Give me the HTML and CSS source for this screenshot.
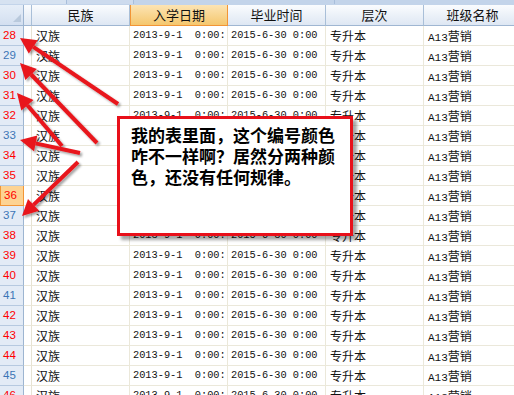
FILE: index.html
```
<!DOCTYPE html>
<html lang="zh-CN">
<head>
<meta charset="UTF-8">
<meta name="viewport" content="width=device-width, initial-scale=1.0">
<title>表格</title>
<link rel="stylesheet" href="styles.css">
</head>
<body>

<div class="topbar">
    <span class="tab1"></span>
    <span class="tab2"></span>
    <span class="tab3"></span>
</div>

<div class="sheet">
    <div class="row head">
        <div class="hd corner"><span class="tri"></span></div>
        <div class="hd"></div>
        <div class="hd">民族</div>
        <div class="hd sel">入学日期</div>
        <div class="hd">毕业时间</div>
        <div class="hd">层次</div>
        <div class="hd">班级名称</div>
    </div>
    <div id="rows"></div>
</div>

<div class="callout">我的表里面，这个编号颜色<br>咋不一样啊？居然分两种颜<br>色，还没有任何规律。</div>

<svg class="arrows" width="514" height="395" viewBox="0 0 514 395">
    <defs>
        <filter id="shadow" x="-20%" y="-20%" width="140%" height="140%">
            <feDropShadow dx="2" dy="2" stdDeviation="1.2" flood-color="#000" flood-opacity="0.35"/>
        </filter>
    </defs>
    <g filter="url(#shadow)" fill="#e8141b" stroke="#e8141b">
        <line x1="118" y1="104" x2="33.3" y2="46.9" stroke-width="4"/>
        <polygon points="20,38 37.7,40.3 28.8,53.6" stroke="none"/>
        <line x1="97" y1="143" x2="31.1" y2="74.5" stroke-width="4"/>
        <polygon points="20,63 36.9,69 25.3,80.1" stroke="none"/>
        <line x1="62" y1="146" x2="27.4" y2="105.2" stroke-width="4"/>
        <polygon points="17,93 33.5,100 21.3,110.4" stroke="none"/>
        <line x1="80" y1="153" x2="35.6" y2="143.4" stroke-width="4"/>
        <polygon points="20,140 37.3,135.6 34,151.2" stroke="none"/>
        <line x1="78" y1="162" x2="33.5" y2="204.9" stroke-width="4"/>
        <polygon points="22,216 28,199.1 39.1,210.7" stroke="none"/>
    </g>
</svg>

<script>
    // 编号颜色：r = 红色, b = 蓝色
    var cores = "rbrrrbrrrbrrrbrrrbr";
    var html = "";

    for (var i = 0; i < cores.length; i++) {
        var num = 28 + i;
        var cls = cores[i] === "b" ? "blue" : "red";
        if (num === 36) {
            cls += " sel";
        }
        html += '<div class="row">' +
            '<div class="rh ' + cls + '">' + num + '</div>' +
            '<div class="cell blank"></div>' +
            '<div class="cell">汉族</div>' +
            '<div class="cell num">2013-9-1  0:00:</div>' +
            '<div class="cell num">2015-6-30 0:00</div>' +
            '<div class="cell">专升本</div>' +
            '<div class="cell"><span class="mono">A13</span>营销</div>' +
            '</div>';
    }

    document.getElementById("rows").innerHTML = html;
</script>

</body>
</html>
```

FILE: styles.css
```
body {
    margin: 0;
    width: 514px;
    height: 395px;
    overflow: hidden;
    position: relative;
    background-color: #fff;
    font-family: "Noto Sans CJK SC", sans-serif;
    color: #111;
}

.topbar {
    display: flex;
    height: 5px;
    background-color: #c3d4ea;
}

.topbar span {
    height: 4px;
    border-right: 1px solid #a8bedb;
}

.tab1 {
    width: 66px;
    background-color: #d6e2f1;
}

.tab2 {
    width: 66px;
    background-color: #cddbee;
}

.tab3 {
    width: 200px;
}

.row {
    display: grid;
    grid-template-columns: 24px 8px repeat(5, 98px);
    height: 20px;
}

.row.head {
    height: 21px;
}

.hd {
    box-sizing: border-box;
    border-right: 1px solid #a9bfd8;
    border-bottom: 1px solid #9fb6d2;
    background: linear-gradient(#fafcfe, #dee7f3);
    font-size: 13px;
    line-height: 20px;
    text-align: center;
    white-space: nowrap;
    overflow: hidden;
}

.hd.sel {
    background: linear-gradient(#fce4b4, #f5c76e);
    border: 1px solid #f29536;
    border-top: 0;
    line-height: 20px;
}

.corner {
    position: relative;
    background: linear-gradient(#e6eef8, #d3dff0);
    border-right: 1px solid #9db5d1;
}

.tri {
    position: absolute;
    right: 2px;
    bottom: 3px;
    width: 0;
    height: 0;
    border-left: 8px solid transparent;
    border-bottom: 8px solid #b9c9dc;
}

.cell {
    box-sizing: border-box;
    border-right: 1px solid #ebe8da;
    border-bottom: 1px solid #ebe8da;
    padding-left: 4px;
    font-size: 12px;
    line-height: 19px;
    white-space: pre;
    overflow: hidden;
}

.cell.blank {
    padding: 0;
    border-right: 1px solid #e7e3d3;
}

.num {
    font-family: "Liberation Mono", monospace;
    font-size: 10.3px;
    padding-left: 3px;
}

.mono {
    font-family: "Liberation Mono", monospace;
    font-size: 11px;
}

.rh {
    box-sizing: border-box;
    background-color: #e3ebf6;
    border-right: 1px solid #9db5d1;
    border-bottom: 1px solid #b6c9e0;
    padding-left: 3px;
    font-family: "Liberation Sans", sans-serif;
    font-size: 11.5px;
    line-height: 19px;
}

.rh.sel {
    background-color: #fdd393;
    border: 1px solid #f29536;
    border-top: 0;
}

.red {
    color: #ff0000;
}

.blue {
    color: #3c76b6;
}

.callout {
    position: absolute;
    left: 117px;
    top: 116px;
    width: 236px;
    height: 120px;
    box-sizing: border-box;
    border: 3px solid #e8101a;
    background-color: #fff;
    box-shadow: 4px 4px 3px rgba(0, 0, 0, 0.35);
    padding: 5px 0 0 11px;
    font-size: 17px;
    font-weight: bold;
    line-height: 21px;
    color: #000;
}

.arrows {
    position: absolute;
    left: 0;
    top: 0;
    pointer-events: none;
}
```
